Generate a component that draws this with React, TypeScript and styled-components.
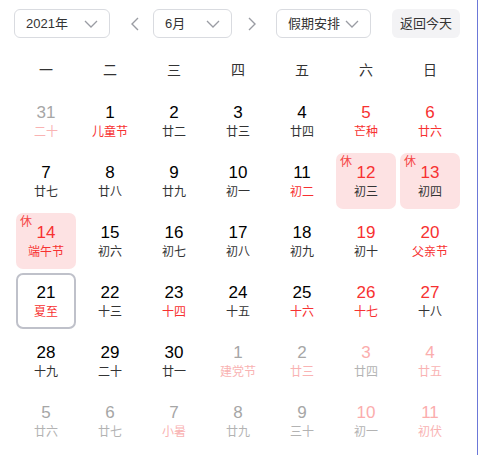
import React from "react";
import styled, { createGlobalStyle } from "styled-components";

const Global = createGlobalStyle`
  html, body { margin: 0; padding: 0; background: #fff; }
  body { font-family: "Liberation Sans", "Noto Sans CJK SC", sans-serif; }
  * { box-sizing: border-box; }
`;

const Root = styled.div`
  width: 478px;
  height: 455px;
  border-right: 1px solid #6c78d8;
  background: #fff;
  overflow: hidden;
`;

const Header = styled.div`
  display: flex;
  align-items: center;
  padding: 9px 0 0 14px;
  height: 38px;
`;

const Select = styled.div<{ $w: number; $gap?: number }>`
  display: flex;
  align-items: center;
  justify-content: space-between;
  width: ${(p) => p.$w}px;
  height: 29px;
  padding: 0 11px 0 11px;
  border: 1px solid #d9dbe0;
  border-radius: 6px;
  font-size: 13px;
  color: #333;
  line-height: 29px;
`;

const SelectLabel = styled.span`
  white-space: nowrap;
`;

const ArrowBtn = styled.div<{ $ml: number; $mr: number }>`
  display: flex;
  align-items: center;
  justify-content: center;
  width: 24px;
  height: 29px;
  margin-left: ${(p) => p.$ml}px;
  margin-right: ${(p) => p.$mr}px;
`;

const TodayBtn = styled.div`
  margin-left: 21px;
  width: 68px;
  height: 29px;
  border-radius: 6px;
  background: #f3f3f5;
  font-size: 13px;
  color: #333;
  line-height: 29px;
  text-align: center;
`;

const WeekRow = styled.div`
  display: grid;
  grid-template-columns: repeat(7, 60px);
  column-gap: 4px;
  padding-left: 16px;
  margin-top: 12px;
  height: 40px;
`;

const WeekDay = styled.div`
  text-align: center;
  line-height: 40px;
  font-size: 14px;
  color: #333;
`;

const Grid = styled.div`
  display: grid;
  grid-template-columns: repeat(7, 60px);
  grid-auto-rows: 56px;
  column-gap: 4px;
  row-gap: 4px;
  padding-left: 16px;
  margin-top: 3px;
`;

const Cell = styled.div<{ $rest?: boolean; $today?: boolean }>`
  position: relative;
  display: flex;
  flex-direction: column;
  align-items: center;
  justify-content: center;
  border-radius: 7px;
  background: ${(p) => (p.$rest ? "#fde2e3" : "transparent")};
  border: ${(p) => (p.$today ? "2px solid #bfc1ca" : "none")};
`;

const NUM: Record<string, string> = {
  k: "#000",
  r: "#f73131",
  g: "#a6a6a6",
  p: "#fbadad",
};
const LUN: Record<string, string> = {
  k: "#333",
  r: "#f73131",
  g: "#b3b3b3",
  p: "#f9b3b3",
};

const Num = styled.div<{ $c: string }>`
  font-size: 17px;
  line-height: 20px;
  color: ${(p) => NUM[p.$c]};
`;

const Lunar = styled.div<{ $c: string }>`
  margin-top: 1px;
  font-size: 12px;
  line-height: 16px;
  color: ${(p) => LUN[p.$c]};
  white-space: nowrap;
`;

const RestTag = styled.span`
  position: absolute;
  left: 4px;
  top: 2px;
  font-size: 12px;
  line-height: 14px;
  color: #f54545;
`;

const Chevron = () => (
  <svg width="14" height="8" viewBox="0 0 14 8">
    <polyline points="1,1 7,7 13,1" fill="none" stroke="#9a9ca3" strokeWidth="1.3" />
  </svg>
);

const Arrow = ({ dir }: { dir: "l" | "r" }) => (
  <svg width="9" height="14" viewBox="0 0 9 14">
    <polyline
      points={dir === "l" ? "8,1 2,7 8,13" : "1,1 7,7 1,13"}
      fill="none"
      stroke="#9a9ca3"
      strokeWidth="1.4"
    />
  </svg>
);

type D = { d: string; l: string; n: string; lc: string; rest?: boolean; today?: boolean };

const c = (d: string, l: string, n: string, lc: string, extra: Partial<D> = {}): D => ({
  d,
  l,
  n,
  lc,
  ...extra,
});

const days: D[] = [
  c("31", "二十", "g", "p"),
  c("1", "儿童节", "k", "r"),
  c("2", "廿二", "k", "k"),
  c("3", "廿三", "k", "k"),
  c("4", "廿四", "k", "k"),
  c("5", "芒种", "r", "r"),
  c("6", "廿六", "r", "r"),

  c("7", "廿七", "k", "k"),
  c("8", "廿八", "k", "k"),
  c("9", "廿九", "k", "k"),
  c("10", "初一", "k", "k"),
  c("11", "初二", "k", "r"),
  c("12", "初三", "r", "k", { rest: true }),
  c("13", "初四", "r", "k", { rest: true }),

  c("14", "端午节", "r", "r", { rest: true }),
  c("15", "初六", "k", "k"),
  c("16", "初七", "k", "k"),
  c("17", "初八", "k", "k"),
  c("18", "初九", "k", "k"),
  c("19", "初十", "r", "k"),
  c("20", "父亲节", "r", "r"),

  c("21", "夏至", "k", "r", { today: true }),
  c("22", "十三", "k", "k"),
  c("23", "十四", "k", "r"),
  c("24", "十五", "k", "k"),
  c("25", "十六", "k", "r"),
  c("26", "十七", "r", "r"),
  c("27", "十八", "r", "k"),

  c("28", "十九", "k", "k"),
  c("29", "二十", "k", "k"),
  c("30", "廿一", "k", "k"),
  c("1", "建党节", "g", "p"),
  c("2", "廿三", "g", "p"),
  c("3", "廿四", "p", "g"),
  c("4", "廿五", "p", "p"),

  c("5", "廿六", "g", "g"),
  c("6", "廿七", "g", "g"),
  c("7", "小暑", "g", "p"),
  c("8", "廿九", "g", "g"),
  c("9", "三十", "g", "g"),
  c("10", "初一", "p", "g"),
  c("11", "初伏", "p", "p"),
];

const weekDays = ["一", "二", "三", "四", "五", "六", "日"];

export default function App() {
  return (
    <Root>
      <Global />
      <Header>
        <Select $w={96}>
          <SelectLabel>2021年</SelectLabel>
          <Chevron />
        </Select>
        <ArrowBtn $ml={12} $mr={7}>
          <Arrow dir="l" />
        </ArrowBtn>
        <Select $w={79}>
          <SelectLabel>6月</SelectLabel>
          <Chevron />
        </Select>
        <ArrowBtn $ml={8} $mr={12}>
          <Arrow dir="r" />
        </ArrowBtn>
        <Select $w={95}>
          <SelectLabel>假期安排</SelectLabel>
          <Chevron />
        </Select>
        <TodayBtn>返回今天</TodayBtn>
      </Header>
      <WeekRow>
        {weekDays.map((w) => (
          <WeekDay key={w}>{w}</WeekDay>
        ))}
      </WeekRow>
      <Grid>
        {days.map((x, i) => (
          <Cell key={i} $rest={x.rest} $today={x.today}>
            {x.rest && <RestTag>休</RestTag>}
            <Num $c={x.n}>{x.d}</Num>
            <Lunar $c={x.lc}>{x.l}</Lunar>
          </Cell>
        ))}
      </Grid>
    </Root>
  );
}
